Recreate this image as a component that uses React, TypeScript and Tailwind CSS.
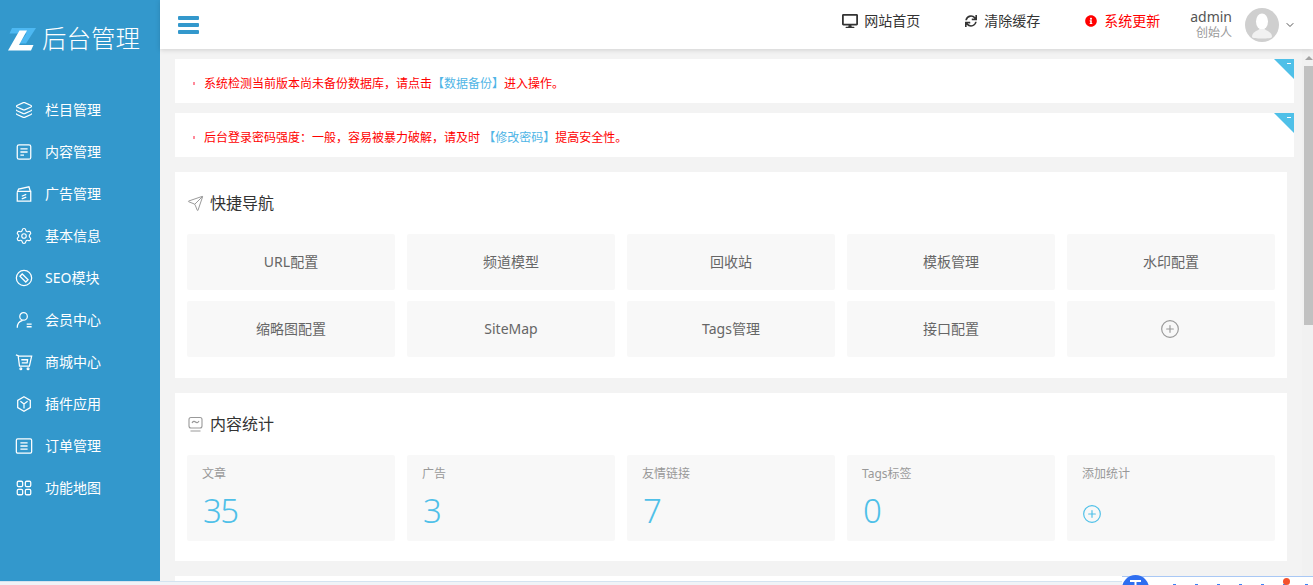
import { Layers, Settings, Send, CirclePlus, ChevronDown } from 'lucide-react'
import { FaDesktop, FaSync, FaInfoCircle } from 'react-icons/fa'
import type { ReactNode } from 'react'

const FONT = "font-['Noto_Sans','Noto_Sans_CJK_SC',sans-serif]"

function Ico({ children }: { children: ReactNode }) {
  return (
    <svg viewBox="0 0 20 20" fill="none" stroke="currentColor" strokeWidth="1.4" className="w-[18px] h-[18px]">
      {children}
    </svg>
  )
}

const NAV_ITEMS: { label: string; icon: ReactNode }[] = [
  { label: '栏目管理', icon: <Layers className="w-[18px] h-[18px]" strokeWidth={1.5} /> },
  {
    label: '内容管理',
    icon: (
      <Ico>
        <rect x="2.500" y="2" width="15" height="16" rx="2" />
        <path d="M6 6.500h8M6 10h8M6 13.500h4" />
      </Ico>
    ),
  },
  {
    label: '广告管理',
    icon: (
      <Ico>
        <path d="M2.500 8v10h15V7H3" />
        <path d="M2.500 8 4 4.500 15.500 2l1.500 5" />
        <path d="M7.500 12.500l5-2M7.500 15.500l5-2" />
      </Ico>
    ),
  },
  { label: '基本信息', icon: <Settings className="w-[18px] h-[18px]" strokeWidth={1.5} /> },
  {
    label: 'SEO模块',
    icon: (
      <Ico>
        <circle cx="10" cy="10" r="8.500" />
        <path d="M5.500 8 8 5.500l6.500 6.500-2.500 2.500z" />
      </Ico>
    ),
  },
  {
    label: '会员中心',
    icon: (
      <Ico>
        <circle cx="9.500" cy="6" r="4.200" />
        <path d="M2.500 18.500c0-4 2.500-7 6-8M13 14.500h5.500M13 17.500h5.500" />
      </Ico>
    ),
  },
  {
    label: '商城中心',
    icon: (
      <Ico>
        <path d="M1 2l2.500 1 1.500 11.500h11l2.500-11H4" />
        <path d="M7 7.500h7l-.5 3.500H7.500" />
        <circle cx="6.500" cy="17.500" r="1" />
        <circle cx="14.500" cy="17.500" r="1" />
      </Ico>
    ),
  },
  {
    label: '插件应用',
    icon: (
      <Ico>
        <path d="M10 2l7 4v8l-7 4-7-4V6z" />
        <path d="M6 7l4 3 4-3M10 10v5" />
      </Ico>
    ),
  },
  {
    label: '订单管理',
    icon: (
      <Ico>
        <rect x="1.500" y="2" width="17" height="16" rx="1.500" />
        <path d="M6 6.500h8M6 10h8M6 13.500h8" />
      </Ico>
    ),
  },
  {
    label: '功能地图',
    icon: (
      <Ico>
        <rect x="2.500" y="2.500" width="6" height="6" rx="1.500" />
        <rect x="11.500" y="2.500" width="6" height="6" rx="1.500" />
        <rect x="2.500" y="11.500" width="6" height="6" rx="1.500" />
        <rect x="11.500" y="11.500" width="6" height="6" rx="1.500" />
      </Ico>
    ),
  },
]

const QUICK_LINKS = ['URL配置', '频道模型', '回收站', '模板管理', '水印配置', '缩略图配置', 'SiteMap', 'Tags管理', '接口配置']

const STATS = [
  { label: '文章', value: '35' },
  { label: '广告', value: '3' },
  { label: '友情链接', value: '7' },
  { label: 'Tags标签', value: '0' },
]

function Logo() {
  return (
    <div className="h-[79px] flex items-center pl-2 shrink-0">
      <svg viewBox="0 0 28 23" className="w-[28px] h-[23px] shrink-0">
        <path d="M4 0h24L18 15.500h-6.500L18.500 5.500H1.500z" fill="#4db8f2" />
        <path d="M11.500 2.500H19L11 17h14.500l-2.500 5.500H0z" fill="#ffffff" />
      </svg>
      <span className="ml-[6px] text-[24.500px] leading-none font-extralight text-white">后台管理</span>
    </div>
  )
}

function Sidebar() {
  return (
    <aside className="w-[160px] shrink-0 bg-[#3398cc] text-white flex flex-col">
      <Logo />
      <nav className="flex flex-col pt-[10px]">
        {NAV_ITEMS.map((item) => (
          <a key={item.label} className="h-[42px] flex items-center pl-[15px] gap-3 text-sm">
            {item.icon}
            <span>{item.label}</span>
          </a>
        ))}
      </nav>
    </aside>
  )
}

function Avatar() {
  return (
    <div className="w-[34px] h-[34px] rounded-full bg-[#cfcfcf] overflow-hidden flex items-end justify-center">
      <svg viewBox="0 0 34 34" className="w-[34px] h-[34px]">
        <ellipse cx="17" cy="13.500" rx="6" ry="8" fill="#fff" />
        <path d="M7 29c0-5 5-6 7.500-8h5c2.500 2 7.500 3 7.500 8 0 2-20 2-20 0z" fill="#f1f1f1" />
      </svg>
    </div>
  )
}

function Header() {
  return (
    <header className="h-[49px] shrink-0 bg-white shadow-[0_1px_5px_rgba(0,0,0,0.15)] flex items-center relative z-10 text-sm text-[#333]">
      <div className="ml-[18px] flex flex-col gap-[3px] w-[21px]">
        <span className="h-1 rounded-[1px] bg-[#3398cc]" />
        <span className="h-1 rounded-[1px] bg-[#3398cc]" />
        <span className="h-1 rounded-[1px] bg-[#3398cc]" />
      </div>
      <div className="ml-auto flex items-center mr-[17px]">
        <a className="flex items-center gap-[6px] mr-[45px] pb-2">
          <FaDesktop className="w-4 h-4" />
          <span>网站首页</span>
        </a>
        <a className="flex items-center gap-[7px] mr-[45px] pb-2">
          <FaSync className="w-3 h-3" />
          <span>清除缓存</span>
        </a>
        <a className="flex items-center gap-[7px] mr-[30px] pb-2 text-[#ff0000]">
          <FaInfoCircle className="w-3 h-3" />
          <span>系统更新</span>
        </a>
        <div className="flex flex-col items-end mr-[13px]">
          <span className="text-sm leading-[15px] text-[#555]">admin</span>
          <span className="text-xs leading-[17px] text-[#999]">创始人</span>
        </div>
        <Avatar />
        <ChevronDown className="w-3 h-3 ml-[5px] text-[#555]" strokeWidth={2} />
      </div>
    </header>
  )
}

function Alert({ children }: { children: ReactNode }) {
  return (
    <div className="relative h-[44px] bg-white mr-2 pl-[18px] pt-[5px] flex items-center text-xs text-[#ff0000]">
      <span className="w-[2px] h-[3px] bg-[#ff8a9a] mr-[9px] shrink-0" />
      <span>{children}</span>
      <div className="absolute top-0 right-0 w-5 h-5 bg-[#4fc0e8] [clip-path:polygon(0_0,100%_0,100%_100%)]">
        <span className="absolute top-[4px] right-[3px] w-[4px] h-[1px] bg-white" />
      </div>
    </div>
  )
}

function Tile({ children }: { children: ReactNode }) {
  return (
    <div className="h-[56px] rounded-[2px] bg-[#f8f8f8] flex items-center justify-center text-sm text-[#666]">
      {children}
    </div>
  )
}

function Card({ icon, title, children }: { icon: ReactNode; title: string; children: ReactNode }) {
  return (
    <section className="bg-white mr-[15px] px-3">
      <div className="h-[62px] flex items-center gap-[6px] text-base text-[#333]">
        {icon}
        <span>{title}</span>
      </div>
      {children}
    </section>
  )
}

function Content() {
  return (
    <div className="flex-1 min-h-0 flex bg-[#f3f3f3]">
      <main className="flex-1 min-w-0 overflow-hidden pl-[15px] pt-[10px] flex flex-col">
        <div className="flex flex-col gap-[10px]">
          <Alert>
            系统检测当前版本尚未备份数据库，请点击<span className="text-[#4fb5e6]">【数据备份】</span>进入操作。
          </Alert>
          <Alert>
            后台登录密码强度：一般，容易被暴力破解，请及时 <span className="text-[#4fb5e6]">【修改密码】</span>提高安全性。
          </Alert>
        </div>

        <div className="mt-[15px] flex flex-col gap-[15px]">
          <Card icon={<Send className="w-[17px] h-[17px] text-[#999]" strokeWidth={1.4} />} title="快捷导航">
            <div className="grid grid-cols-5 gap-x-3 gap-y-[11px] pb-[21px]">
              {QUICK_LINKS.map((link) => (
                <Tile key={link}>{link}</Tile>
              ))}
              <Tile>
                <CirclePlus className="w-[20px] h-[20px] mr-[3px] text-[#999]" strokeWidth={1.4} />
              </Tile>
            </div>
          </Card>

          <Card
            icon={
              <svg viewBox="0 0 17 17" fill="none" stroke="#999" strokeWidth="1.100" className="w-[17px] h-[17px]">
                <rect x="2" y="1.500" width="13" height="10.500" rx="2" />
                <path d="M5 7c1-2 2.500-2 3.500-1s2.500 1 3.500-1M3.500 15h10" />
              </svg>
            }
            title="内容统计"
          >
            <div className="grid grid-cols-5 gap-x-3 pb-5">
              {STATS.map((stat) => (
                <div key={stat.label} className="h-[86px] rounded-[2px] bg-[#f8f8f8] pl-[15px] pt-[10px]">
                  <div className="text-xs leading-[18px] text-[#999]">{stat.label}</div>
                  <div className="mt-[6px] ml-px text-[33px] leading-[44px] tracking-[-1.500px] font-light text-[#4fc0e8]">{stat.value}</div>
                </div>
              ))}
              <div className="h-[86px] rounded-[2px] bg-[#f8f8f8] pl-[15px] pt-[10px]">
                <div className="text-xs leading-[18px] text-[#999]">添加统计</div>
                <CirclePlus className="mt-[21px] w-[20px] h-[20px] text-[#4fc0e8]" strokeWidth={1.4} />
              </div>
            </div>
          </Card>

          <section className="bg-white mr-[15px] h-[100px] shrink-0" />
        </div>
      </main>

      <div className="w-[11px] shrink-0 flex flex-col items-end bg-[#f1f1f1]">
        <div className="h-[17px] w-[9px] flex items-center justify-center">
          <span className="border-x-[4px] border-b-[4px] border-x-transparent border-b-[#a3a3a3]" />
        </div>
        <div className="w-[9px] h-[259px] bg-[#c1c1c1]" />
      </div>
    </div>
  )
}

function BottomOverlay() {
  return (
    <>
      <div className="absolute left-0 right-0 bottom-0 h-1 bg-[#f0f3f7] border-t border-[#d5e3f0]" />
      <div className="absolute right-0 bottom-0 left-[1122px] h-[9px] bg-white border-t border-[#a9c8f5] overflow-hidden">
        <span className="absolute left-[51px] top-[7px] w-[140px] h-1 bg-[repeating-linear-gradient(90deg,#3b82f6_0_3px,transparent_3px_22px)]" />
      </div>
      <svg viewBox="0 0 27 10" className="absolute left-[1122px] top-[575px] w-[27px] h-[10px]">
        <circle cx="13.500" cy="13.500" r="13.500" fill="#2f6ef0" />
        <path d="M8 5h11v2h-4.500v3h-2V7H8z" fill="#fff" />
      </svg>
      <span className="absolute left-[1283px] top-[578px] w-[7px] h-[7px] rounded-full bg-[#f4512c]" />
    </>
  )
}

export default function App() {
  return (
    <div className={`relative h-screen w-screen overflow-hidden flex ${FONT}`}>
      <Sidebar />
      <div className="flex-1 min-w-0 flex flex-col">
        <Header />
        <Content />
      </div>
      <BottomOverlay />
    </div>
  )
}
